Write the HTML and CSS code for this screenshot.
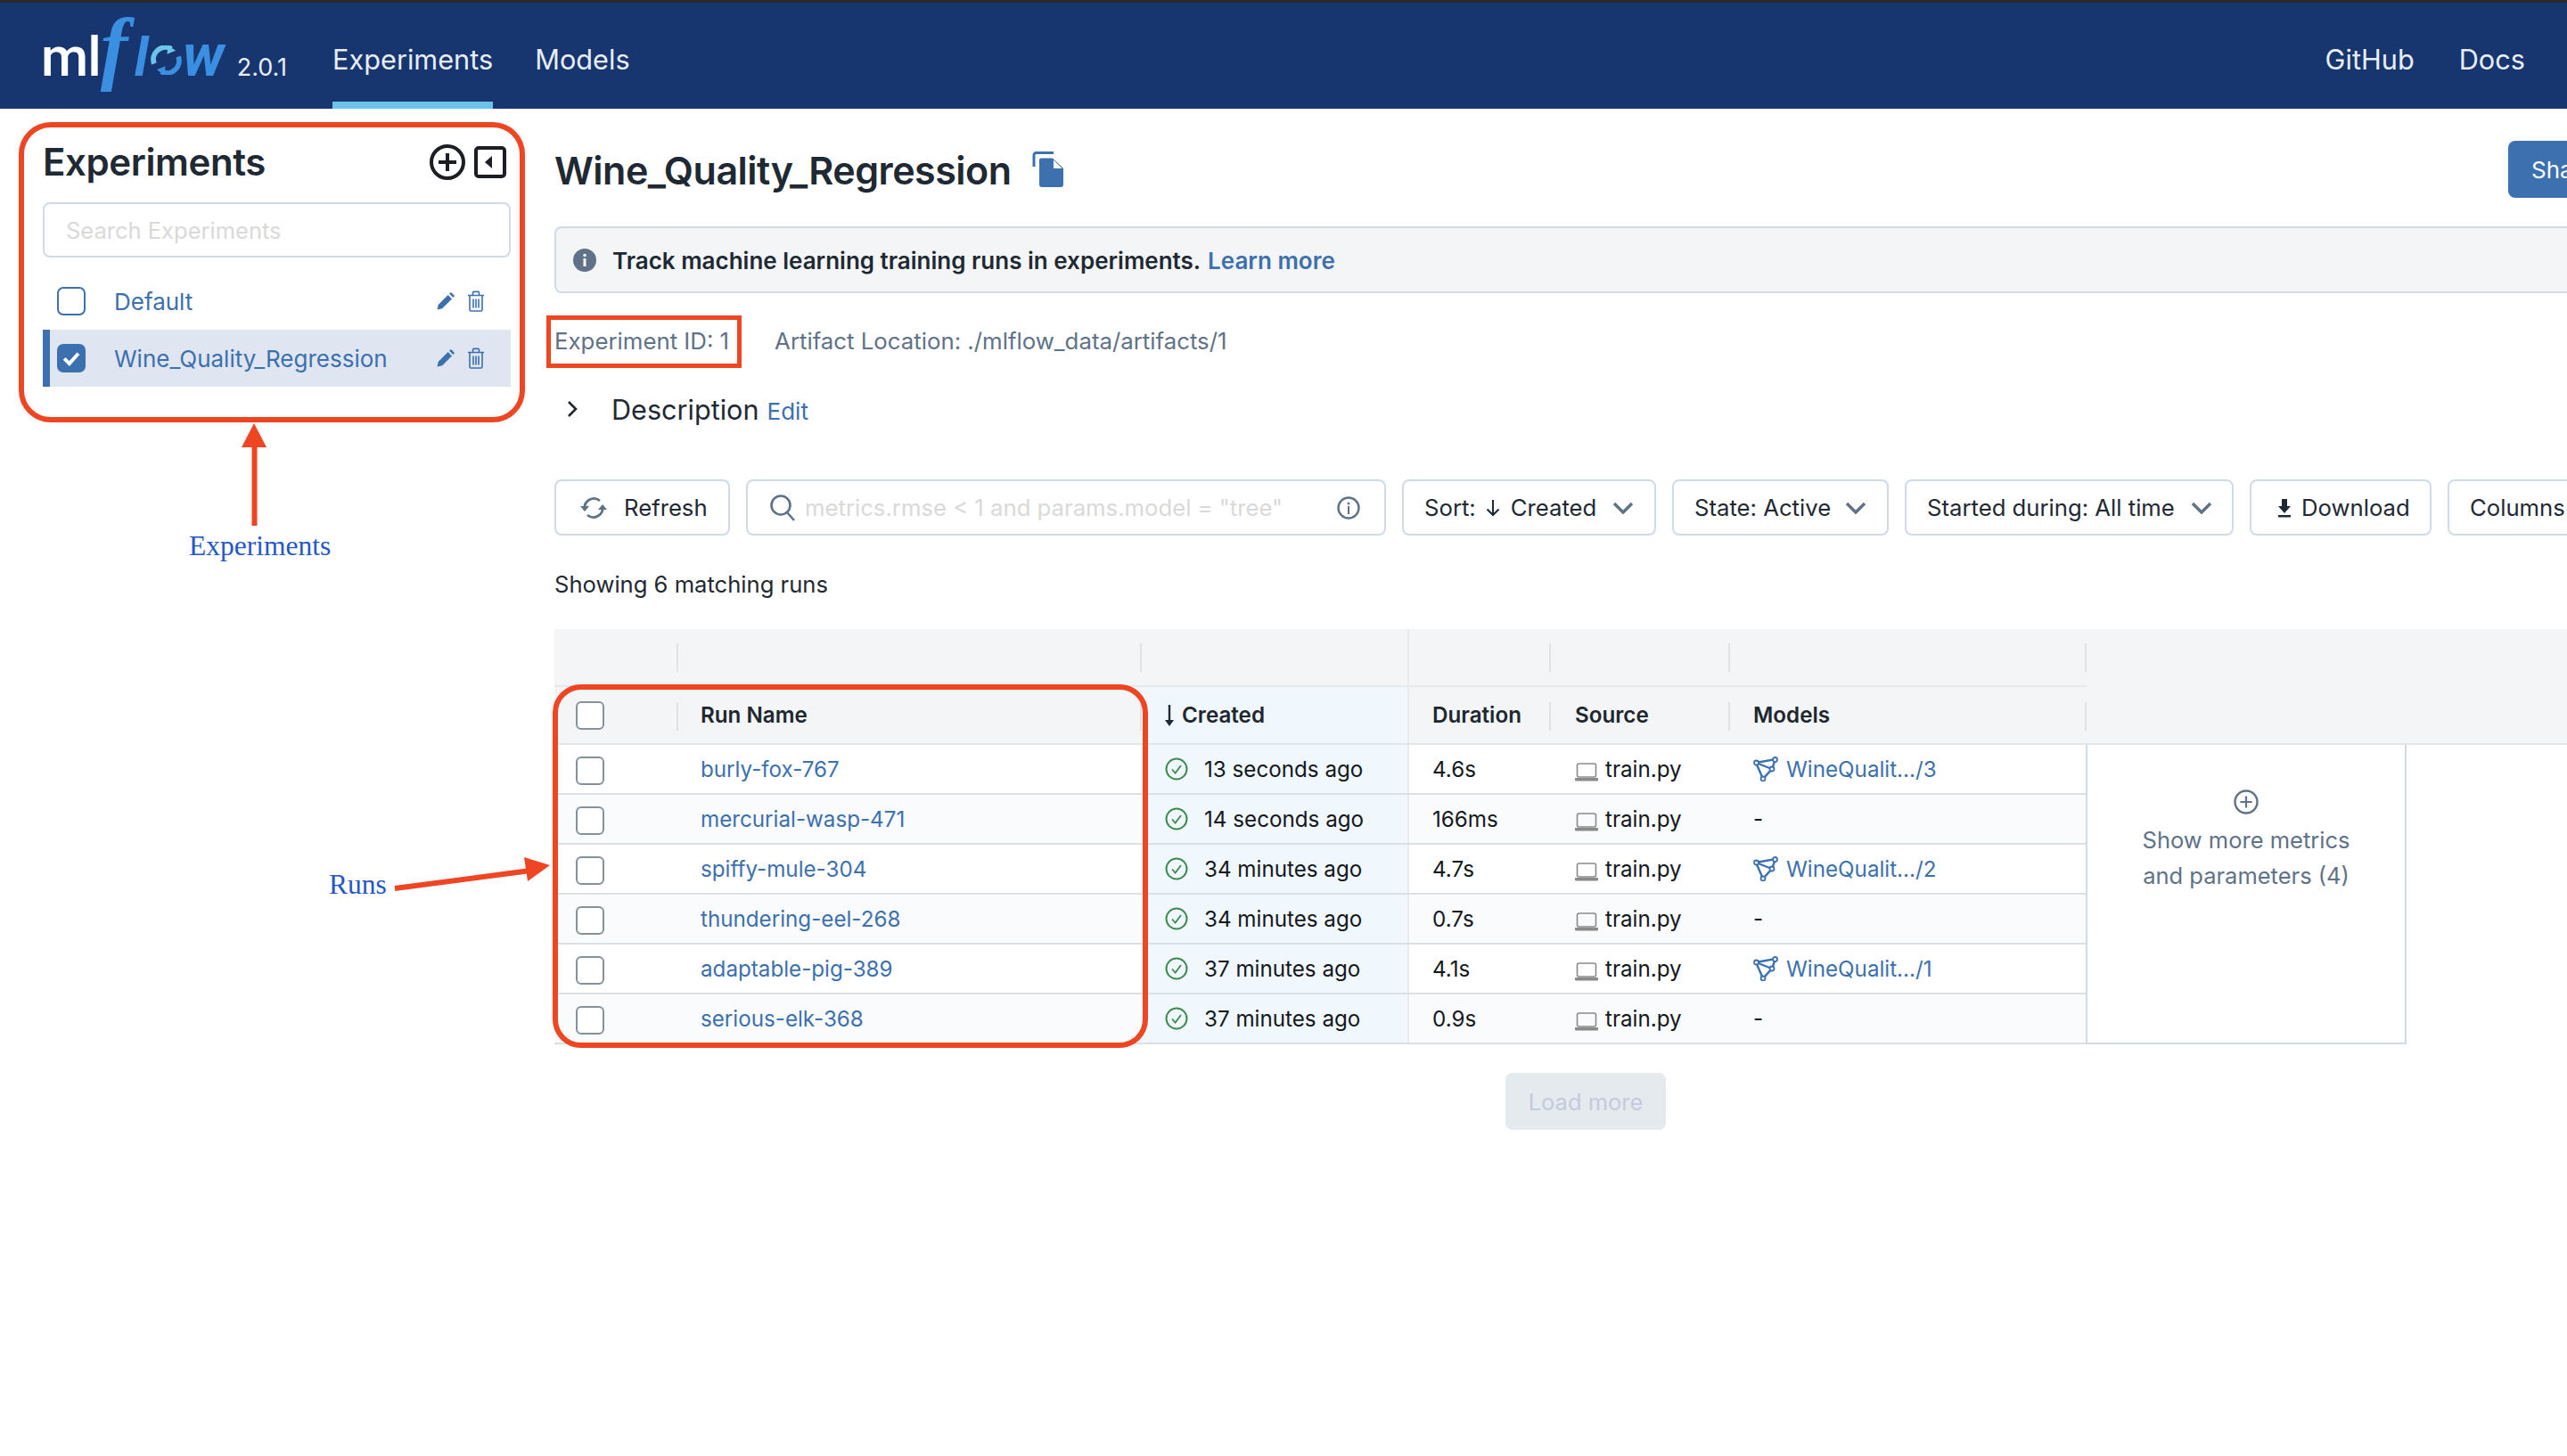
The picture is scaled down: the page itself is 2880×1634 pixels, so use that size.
FILE: index.html
```html
<!DOCTYPE html>
<html lang="en">
<head>
<meta charset="utf-8">
<title>MLflow Experiments</title>
<link rel="stylesheet" href="styles.css">
</head>
<body>
<svg class="defs" width="0" height="0" aria-hidden="true">
  <symbol id="i-pencil" viewBox="0 0 20 20"><path d="M0.5 19.5l1.2-5.6L12.6 3l4.4 4.4L6.1 18.3z"/><path d="M14 1.6l1.3-1.1a1 1 0 0 1 1.3 0l2.9 2.9a1 1 0 0 1 0 1.3L18.4 6z"/></symbol>
  <symbol id="i-trash" viewBox="0 0 20 24"><path d="M1 5.500h18M6.500 5V2.600a1.200 1.200 0 0 1 1.200-1.200h4.600a1.200 1.200 0 0 1 1.200 1.200V5M3 6v15.500a1.500 1.500 0 0 0 1.500 1.500h11a1.500 1.500 0 0 0 1.500-1.500V6M7 9.500v10M10 9.500v10M13 9.500v10" fill="none" stroke="currentColor" stroke-width="1.600"/></symbol>
  <symbol id="i-box" viewBox="0 0 26 26"><circle cx="13" cy="13" r="11.500" fill="none" stroke="currentColor" stroke-width="2"/><path d="M8 13.500l3.600 4L18 9" fill="none" stroke="currentColor" stroke-width="1.800"/></symbol>
  <symbol id="i-laptop" viewBox="0 0 26 21"><rect x="2.500" y="1" width="21" height="15" rx="2" fill="none" stroke="#8a8a8a" stroke-width="1.600"/><path d="M0 17h26v2.500a1 1 0 0 1-1 1H1a1 1 0 0 1-1-1z" fill="#8a8a8a"/></symbol>
  <symbol id="i-model" viewBox="0 0 28 28"><path d="M3 7L25 3 21 14 11 25zM3 7L21 14" fill="none" stroke="#3c70ae" stroke-width="2.400"/><circle cx="3.500" cy="7" r="2.500" fill="#fff" stroke="#3c70ae" stroke-width="1.800"/><circle cx="24.500" cy="3.500" r="2.500" fill="#fff" stroke="#3c70ae" stroke-width="1.800"/><circle cx="21" cy="14" r="2.500" fill="#fff" stroke="#3c70ae" stroke-width="1.800"/><circle cx="11" cy="25" r="2.500" fill="#fff" stroke="#3c70ae" stroke-width="1.800"/></symbol>
  <symbol id="i-chev" viewBox="0 0 24 14"><path d="M2 2l10 10L22 2" fill="none" stroke="#5f7287" stroke-width="3.400"/></symbol>
</svg>

<header class="topbar">
  <a class="logo" aria-label="mlflow">
    <span class="logo-ml">ml</span><span class="logo-f">f</span><span class="logo-l">l</span><svg class="logo-o" viewBox="0 0 36 34" aria-hidden="true"><path d="M4 21A14 14 0 0 1 24 4" fill="none" stroke="#6cc4ec" stroke-width="6"/><path d="M20 0l9 6-10 4z" fill="#6cc4ec"/><path d="M32 13A14 14 0 0 1 12 30" fill="none" stroke="#3b8fe0" stroke-width="6"/><path d="M16 34l-9-6 10-4z" fill="#3b8fe0"/></svg><span class="logo-w">w</span>
    <span class="version">2.0.1</span>
  </a>
  <nav class="nav">
    <a class="nav-item active">Experiments</a>
    <a class="nav-item">Models</a>
  </nav>
  <nav class="nav nav-right">
    <a class="nav-item">GitHub</a>
    <a class="nav-item">Docs</a>
  </nav>
</header>

<div class="page">
  <aside class="side">
    <div class="side-head">
      <h2 class="side-title">Experiments</h2>
      <svg class="ico-plus" viewBox="0 0 40 40"><circle cx="20" cy="20" r="18" fill="none" stroke="#1b1f23" stroke-width="4"/><path d="M20 10v20M10 20h20" stroke="#1b1f23" stroke-width="4"/></svg>
      <svg class="ico-collapse" viewBox="0 0 36 36"><rect x="2" y="2" width="32" height="32" rx="3" fill="none" stroke="#1b1f23" stroke-width="4"/><path d="M20 11v14l-8-7z" fill="#1b1f23"/></svg>
    </div>
    <div class="side-search">Search Experiments</div>
    <ul class="exp-list">
      <li class="exp-row">
        <span class="exp-check"></span>
        <a class="exp-name">Default</a>
        <svg class="ico-pencil"><use href="#i-pencil"/></svg>
        <svg class="ico-trash"><use href="#i-trash"/></svg>
      </li>
      <li class="exp-row selected">
        <span class="exp-check on"><svg viewBox="0 0 32 32"><path d="M7 16.500l6.500 6.500L25 10" fill="none" stroke="#fff" stroke-width="4.500"/></svg></span>
        <a class="exp-name">Wine_Quality_Regression</a>
        <svg class="ico-pencil"><use href="#i-pencil"/></svg>
        <svg class="ico-trash"><use href="#i-trash"/></svg>
      </li>
    </ul>
  </aside>

  <main class="main">
    <div class="title-row">
      <h1 class="title">Wine_Quality_Regression</h1>
      <svg class="ico-copy" viewBox="0 0 36 40"><path d="M2 17V4a2.500 2.500 0 0 1 2.500-2.500H24" fill="none" stroke="#3c70ae" stroke-width="3"/><path d="M8 9.500a2 2 0 0 1 2-2H23L35 19V37a3 3 0 0 1-3 3H11a3 3 0 0 1-3-3z" fill="#3c70ae"/><path d="M24 9.500V19H33.500z" fill="#fff"/></svg>
      <button class="share">Share</button>
    </div>

    <div class="banner">
      <svg class="ico-info" viewBox="0 0 26 26"><circle cx="13" cy="13" r="13" fill="#5f7287"/><circle cx="13" cy="7.500" r="1.800" fill="#fff"/><rect x="11.500" y="11" width="3" height="9" fill="#fff"/></svg>
      <span class="banner-text">Track machine learning training runs in experiments.</span>
      <a class="banner-link">Learn more</a>
    </div>

    <div class="meta">
      <span>Experiment ID: 1</span>
      <span>Artifact Location: ./mlflow_data/artifacts/1</span>
    </div>

    <div class="desc">
      <svg class="ico-right" viewBox="0 0 12 20"><path d="M2 2l8 8-8 8" fill="none" stroke="#1f2933" stroke-width="2.600"/></svg>
      <span class="desc-label">Description</span>
      <a class="desc-edit">Edit</a>
    </div>

    <div class="toolbar">
      <button class="btn btn-refresh"><svg class="ico-refresh" viewBox="0 0 30 30"><path d="M5 17A10.500 10.500 0 0 1 22 7" fill="none" stroke="#5f7287" stroke-width="2.800"/><path d="M25 13A10.500 10.500 0 0 1 8 23" fill="none" stroke="#5f7287" stroke-width="2.800"/><path d="M0 13h10l-5 6zM20 17h10l-5-6z" fill="#5f7287"/></svg><span>Refresh</span></button>
      <div class="filter">
        <svg class="ico-search" viewBox="0 0 30 30"><circle cx="13" cy="12" r="10.500" fill="none" stroke="#5f7287" stroke-width="2.600"/><path d="M20 20l8 9" stroke="#5f7287" stroke-width="2.600"/></svg>
        <span class="filter-ph">metrics.rmse &lt; 1 and params.model = "tree"</span>
        <svg class="ico-i" viewBox="0 0 26 26"><circle cx="13" cy="13" r="11.500" fill="none" stroke="#5f7287" stroke-width="2.400"/><circle cx="13" cy="8" r="1.500" fill="#5f7287"/><rect x="12" y="11" width="2" height="9" fill="#5f7287"/></svg>
      </div>
      <button class="btn btn-sort"><span>Sort:</span><svg class="ico-down" viewBox="0 0 18 20"><path d="M9 1v17M2.500 11.500L9 18l6.500-6.500" fill="none" stroke="#1f2933" stroke-width="2"/></svg><span>Created</span><svg class="ico-chev"><use href="#i-chev"/></svg></button>
      <button class="btn btn-state"><span>State: Active</span><svg class="ico-chev"><use href="#i-chev"/></svg></button>
      <button class="btn btn-time"><span>Started during: All time</span><svg class="ico-chev"><use href="#i-chev"/></svg></button>
      <button class="btn btn-dl"><svg class="ico-dl" viewBox="0 0 16 22"><path d="M5 1h6v8h4l-7 8-7-8h4zM1 19h14v2.500H1z" fill="#1f2933"/></svg><span>Download</span></button>
      <button class="btn btn-cols">Columns</button>
    </div>

    <div class="count">Showing 6 matching runs</div>

    <section class="runs">
      <div class="grid group-row">
        <div class="gcell"></div><div class="gcell"></div><div class="gcell g-created"></div><div class="gcell"></div><div class="gcell"></div><div class="gcell"></div>
      </div>
      <div class="grid head-row">
        <div class="hcell sep"><span class="cb"></span></div>
        <div class="hcell sep name">Run Name</div>
        <div class="hcell created"><svg class="ico-sort" viewBox="0 0 10 24"><path d="M5 0v20" stroke="#1f2933" stroke-width="2.400"/><path d="M0 17h10l-5 7z" fill="#1f2933"/></svg>Created</div>
        <div class="hcell sep dur">Duration</div>
        <div class="hcell sep src">Source</div>
        <div class="hcell sep mod">Models</div>
      </div>
      <div class="body">
        <div class="rows">
          <div class="grid row">
            <div class="cell"><span class="cb"></span></div>
            <div class="cell name"><a>burly-fox-767</a></div>
            <div class="cell created"><svg class="ico-ok"><use href="#i-box"/></svg>13 seconds ago</div>
            <div class="cell dur">4.6s</div>
            <div class="cell src"><svg class="ico-laptop"><use href="#i-laptop"/></svg>train.py</div>
            <div class="cell mod"><svg class="ico-model"><use href="#i-model"/></svg><a>WineQualit.../3</a></div>
          </div>
          <div class="grid row">
            <div class="cell"><span class="cb"></span></div>
            <div class="cell name"><a>mercurial-wasp-471</a></div>
            <div class="cell created"><svg class="ico-ok"><use href="#i-box"/></svg>14 seconds ago</div>
            <div class="cell dur">166ms</div>
            <div class="cell src"><svg class="ico-laptop"><use href="#i-laptop"/></svg>train.py</div>
            <div class="cell mod">-</div>
          </div>
          <div class="grid row">
            <div class="cell"><span class="cb"></span></div>
            <div class="cell name"><a>spiffy-mule-304</a></div>
            <div class="cell created"><svg class="ico-ok"><use href="#i-box"/></svg>34 minutes ago</div>
            <div class="cell dur">4.7s</div>
            <div class="cell src"><svg class="ico-laptop"><use href="#i-laptop"/></svg>train.py</div>
            <div class="cell mod"><svg class="ico-model"><use href="#i-model"/></svg><a>WineQualit.../2</a></div>
          </div>
          <div class="grid row">
            <div class="cell"><span class="cb"></span></div>
            <div class="cell name"><a>thundering-eel-268</a></div>
            <div class="cell created"><svg class="ico-ok"><use href="#i-box"/></svg>34 minutes ago</div>
            <div class="cell dur">0.7s</div>
            <div class="cell src"><svg class="ico-laptop"><use href="#i-laptop"/></svg>train.py</div>
            <div class="cell mod">-</div>
          </div>
          <div class="grid row">
            <div class="cell"><span class="cb"></span></div>
            <div class="cell name"><a>adaptable-pig-389</a></div>
            <div class="cell created"><svg class="ico-ok"><use href="#i-box"/></svg>37 minutes ago</div>
            <div class="cell dur">4.1s</div>
            <div class="cell src"><svg class="ico-laptop"><use href="#i-laptop"/></svg>train.py</div>
            <div class="cell mod"><svg class="ico-model"><use href="#i-model"/></svg><a>WineQualit.../1</a></div>
          </div>
          <div class="grid row">
            <div class="cell"><span class="cb"></span></div>
            <div class="cell name"><a>serious-elk-368</a></div>
            <div class="cell created"><svg class="ico-ok"><use href="#i-box"/></svg>37 minutes ago</div>
            <div class="cell dur">0.9s</div>
            <div class="cell src"><svg class="ico-laptop"><use href="#i-laptop"/></svg>train.py</div>
            <div class="cell mod">-</div>
          </div>
        </div>
        <div class="more">
          <svg class="ico-more" viewBox="0 0 28 28"><circle cx="14" cy="14" r="12.500" fill="none" stroke="#5f7287" stroke-width="2.400"/><path d="M14 7.500v13M7.500 14h13" stroke="#5f7287" stroke-width="2.200"/></svg>
          <p class="more-text">Show more metrics<br>and parameters (4)</p>
        </div>
      </div>
    </section>

    <div class="load"><button class="load-btn">Load more</button></div>
  </main>
</div>

<div class="mark mark-side"></div>
<div class="mark mark-id"></div>
<div class="mark mark-runs"></div>
<svg class="arrows" viewBox="0 0 2880 1634" aria-hidden="true">
  <path d="M285.500 590V495" stroke="#ee4523" stroke-width="6" fill="none"/>
  <path d="M285 475l14 27h-28z" fill="#ee4523"/>
  <path d="M443 997L595 977" stroke="#ee4523" stroke-width="6" fill="none"/>
  <path d="M617 971L592 989 588 962z" fill="#ee4523"/>
</svg>
<span class="note note-exp">Experiments</span>
<span class="note note-runs">Runs</span>
</body>
</html>
```
FILE: styles.css
```css
* { box-sizing: border-box; }
html, body { margin: 0; padding: 0; }
body {
  position: relative;
  width: 2880px;
  height: 1634px;
  overflow: hidden;
  background: #fff;
  color: #1f2933;
  font-family: Inter, "Noto Sans", "Liberation Sans", sans-serif;
  font-size: 26px;
}
h1, h2, p, ul { margin: 0; padding: 0; }
ul { list-style: none; }
button { font: inherit; }
.defs { position: absolute; }

/* top bar */
.topbar {
  display: flex;
  align-items: stretch;
  height: 122px;
  border-top: 3px solid #2a2a2a;
  background: #17356f;
  color: #e8eef8;
  padding-right: 47px;
}
.logo {
  display: flex;
  align-items: baseline;
  width: 373px;
  padding: 0 0 0 46px;
  line-height: 96px;
  white-space: nowrap;
}
.logo-ml { color: #fff; font: 500 61px/96px Roboto, sans-serif; letter-spacing: -1px; transform: translateY(3px); }
.logo-f { color: #3b8fe0; font: italic 700 92px/96px "Liberation Serif", serif; width: 38px; transform: translateY(2px); }
.logo-l { color: #3b8fe0; font: italic 700 61px/96px Roboto, sans-serif; width: 17px; transform: translateY(3px); }
.logo-o { width: 35px; height: 33px; margin: 0 1px; align-self: center; transform: translateY(5px); }
.logo-w { color: #3b8fe0; font: italic 700 66px/96px Roboto, sans-serif; width: 52px; transform: translateY(3px); }
.version { font-size: 27px; margin-left: 9px; transform: translateY(3px); }
.nav { display: flex; gap: 47px; }
.nav-right { margin-left: auto; gap: 50px; }
.nav-item {
  display: flex;
  align-items: center;
  height: 119px;
  padding-top: 16px;
  font-size: 30.700px;
  border-bottom: 8px solid transparent;
}
.nav-item.active { border-bottom-color: #6bc3ec; }

.page { display: flex; }

/* sidebar */
.side { flex: none; width: 622px; padding: 36px 0 0 48px; }
.side-head { display: flex; align-items: center; height: 48px; width: 525px; }
.side-title { flex: 1; font-size: 42px; font-weight: 600; line-height: 48px; letter-spacing: -0.4px; color: #1f2933; }
.ico-plus { flex: none; width: 40px; height: 40px; margin-right: 10px; }
.ico-collapse { flex: none; width: 36px; height: 36px; margin-right: 5px; }
.side-search {
  display: flex;
  align-items: center;
  width: 525px;
  height: 62px;
  margin-top: 21px;
  padding-left: 24px;
  border: 2px solid #d0dbe7;
  border-radius: 8px;
  color: #d9d9d9;
  font-size: 25.500px;
}
.exp-list { margin-top: 17px; width: 525px; }
.exp-row { display: flex; align-items: center; height: 64px; padding: 0 29px 0 16px; color: #3c70ae; }
.exp-row.selected { background: #dfe6f1; box-shadow: inset 8px 0 0 #3c70ae; }
.exp-check { flex: none; width: 32px; height: 32px; border: 2px solid #3c70ae; border-radius: 7px; background: #fff; }
.exp-check.on { background: #3c70ae; }
.exp-check.on svg { display: block; width: 28px; height: 28px; }
.exp-name { margin-left: 32px; font-size: 26px; flex: 1; }
.ico-pencil { flex: none; width: 20px; height: 20px; fill: #3c70ae; margin-right: 14px; }
.ico-trash { flex: none; width: 20px; height: 24px; color: #3c70ae; }

/* main */
.main { flex: none; width: 2312px; padding-top: 36px; }
.title-row { display: flex; align-items: center; height: 64px; }
.title { font-size: 43px; font-weight: 600; letter-spacing: -0.5px; line-height: 64px; color: #1f2933; transform: translateY(1px); }
.ico-copy { flex: none; width: 36px; height: 40px; margin-left: 23px; }
.share {
  margin-left: auto;
  height: 64px;
  width: 120px;
  flex: none;
  padding: 0 26px;
  background: #3c70ae;
  color: #fff;
  border: 0;
  border-radius: 8px;
  font-size: 26px;
  text-align: left;
}
.banner {
  display: flex;
  align-items: center;
  height: 75px;
  margin-top: 32px;
  padding: 1px 0 0 19px;
  background: #f3f5f7;
  border: 2px solid #d0dbe7;
  border-radius: 8px;
  font-weight: 600;
  font-size: 26px;
}
.ico-info { flex: none; width: 26px; height: 26px; margin-right: 18px; }
.banner-link { margin-left: 8px; color: #3c70ae; font-weight: 600; }
.meta { display: flex; align-items: center; gap: 51px; height: 40px; margin-top: 33px; color: #5f7287; font-size: 25.800px; }
.desc { display: flex; align-items: center; height: 44px; margin-top: 35px; }
.ico-right { flex: none; width: 12px; height: 20px; margin-left: 14px; margin-right: 38px; }
.desc-label { font-size: 30.600px; }
.desc-edit { margin-left: 9px; color: #3c70ae; font-size: 26px; transform: translateY(2px); }
.toolbar { display: flex; gap: 18px; margin-top: 57px; height: 63px; font-size: 25.700px; }
.btn {
  display: flex;
  align-items: center;
  flex: none;
  height: 63px;
  background: #fff;
  border: 2px solid #d0dbe7;
  border-radius: 8px;
  color: #1f2933;
  white-space: nowrap;
  padding: 0 0 0 23px;
}
.btn-refresh { width: 197px; padding-left: 27px; }
.ico-refresh { flex: none; width: 30px; height: 30px; margin-right: 19px; }
.filter {
  display: flex;
  align-items: center;
  flex: none;
  width: 718px;
  height: 63px;
  padding: 0 27px 0 24px;
  border: 2px solid #d0dbe7;
  border-radius: 8px;
}
.ico-search { flex: none; width: 30px; height: 30px; }
.filter-ph { flex: 1; margin-left: 10px; color: #d9d9d9; white-space: nowrap; }
.ico-i { flex: none; width: 26px; height: 26px; }
.btn-sort { width: 285px; }
.ico-down { flex: none; width: 18px; height: 20px; margin: 0 11px 0 10px; }
.ico-chev { flex: none; width: 24px; height: 14px; margin-left: 18px; }
.btn-state .ico-chev { margin-left: 16px; }
.btn-state { width: 243px; }
.btn-time { width: 369px; }
.btn-dl { width: 204px; padding-left: 29px; }
.ico-dl { flex: none; width: 16px; height: 22px; margin-right: 11px; }
.btn-cols { width: 200px; }
.count { margin-top: 35px; height: 40px; line-height: 40px; font-size: 25.600px; }

/* runs table */
.runs { margin-top: 30px; width: 2258px; font-size: 24.200px; }
.grid { display: grid; grid-template-columns: 139px 520px 300px 159px 201px 400px; }
.group-row, .head-row { background: #f3f5f7; }
.group-row { height: 65px; width: 2258px; }
.gcell { height: 63px; border-bottom: 2px solid #e6e8ea; position: relative; box-sizing: content-box; }
.gcell::after { content: ""; position: absolute; right: 0; top: 16px; height: 32px; border-right: 2px solid #e0e3e6; }
.gcell.g-created::after { top: 0; height: 65px; border-color: #e8ebee; }
.head-row { height: 65px; width: 2258px; border-bottom: 2px solid #e2e5e9; font-weight: 600; }
.hcell { position: relative; display: flex; align-items: center; height: 63px; padding-left: 24px; color: #20272e; }
.hcell.sep::after { content: ""; position: absolute; right: 0; top: 17px; height: 32px; border-right: 2px solid #e0e3e6; }
.hcell.created { background: #f0f7fd; padding-left: 26px; border-right: 2px solid #e8ebee; }
.ico-sort { flex: none; width: 10px; height: 24px; margin-right: 9px; }
.cb { display: block; flex: none; width: 32px; height: 32px; background: #fff; border: 2px solid #86929a; border-radius: 6px; }
.row .cb { margin-top: 3px; }
.body { display: flex; }
.rows { flex: none; width: 1719px; }
.row { height: 56px; border-bottom: 2px solid #dcdfe3; background: #fff; }
.row:nth-child(even) { background: #fafbfd; }
.cell { display: flex; align-items: center; padding-left: 24px; color: #14181c; white-space: nowrap; }
.cell a { color: #3c70ae; }
.cell.name, .hcell.name { padding-left: 25px; }
.cell.created { background: #f0f7fd; padding-left: 26px; border-right: 2px solid #e8ebee; }
.cell.dur, .hcell.dur { padding-left: 26px; }
.cell.src, .hcell.src { padding-left: 27px; }
.cell.mod, .hcell.mod { padding-left: 26px; }
.ico-ok { flex: none; width: 26px; height: 26px; margin-right: 18px; color: #3f8a51; }
.ico-laptop { flex: none; width: 26px; height: 21px; margin-right: 8px; transform: translateY(3px); }
.ico-model { flex: none; width: 28px; height: 28px; margin-right: 9px; }
.more {
  flex: none;
  width: 360px;
  height: 336px;
  padding-top: 50px;
  text-align: center;
  border: solid #d0dbe7;
  border-width: 0 2px 2px 2px;
  margin-left: -1px;
  color: #5f7287;
  font-size: 25.500px;
}
.ico-more { display: block; width: 28px; height: 28px; margin: 0 auto; }
.more-text { margin-top: 9px; line-height: 40px; }
.load { width: 2258px; margin-top: 32px; display: flex; padding-left: 1067px; }
.load-btn { width: 180px; height: 64px; background: #e4eaee; border: 0; border-radius: 8px; color: #c3cbdc; font-size: 25.500px; }

/* annotations over the screenshot */
.mark { position: absolute; border: 6px solid #ee4523; }
.mark-side { left: 21px; top: 137px; width: 568px; height: 337px; border-radius: 36px; }
.mark-id { left: 613px; top: 354px; width: 219px; height: 59px; border-width: 5px; }
.mark-runs { left: 620px; top: 768px; width: 668px; height: 408px; border-radius: 32px; }
.arrows { position: absolute; left: 0; top: 0; width: 2880px; height: 1634px; pointer-events: none; }
.note { position: absolute; color: #2557c9; font: 31.500px/36px "Liberation Serif", serif; }
.note-exp { left: 212px; top: 595px; }
.note-runs { left: 369px; top: 975px; }
```
